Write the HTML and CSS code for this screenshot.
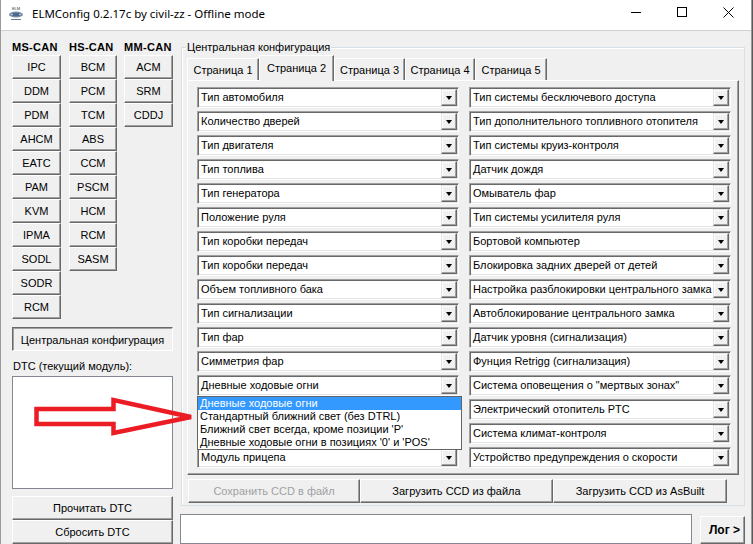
FILE: index.html
```html
<!DOCTYPE html>
<html>
<head>
<meta charset="utf-8">
<link rel="stylesheet" href="styles.css">
</head>
<body>
<div class="window">
  <div class="titlebar">
    <svg class="appicon" width="16" height="16" viewBox="0 0 16 16">
      <text x="8" y="4" font-size="4" font-family="Liberation Sans" text-anchor="middle" fill="#333">ELM</text>
      <ellipse cx="8" cy="8.5" rx="7" ry="3" fill="#7d8ea6"/>
      <ellipse cx="8" cy="8.5" rx="4.5" ry="1.8" fill="#4b6a8f"/>
      <circle cx="4" cy="8.5" r="0.8" fill="#cfe3f5"/>
      <circle cx="12" cy="8.5" r="0.8" fill="#cfe3f5"/>
      <rect x="3" y="13" width="10" height="1" fill="#6b7b8c"/>
    </svg>
    <span class="title">ELMConfig 0.2.17c by civil-zz - Offline mode</span>
    <div class="winctl">
      <span class="ctl"><svg width="10" height="10" viewBox="0 0 10 10"><path d="M0 5.5H10" stroke="#000" stroke-width="1"/></svg></span>
      <span class="ctl"><svg width="10" height="10" viewBox="0 0 10 10"><rect x="0.5" y="0.5" width="9" height="9" fill="none" stroke="#000" stroke-width="1"/></svg></span>
      <span class="ctl"><svg width="11" height="11" viewBox="0 0 11 11"><path d="M0.5 0.5L10.5 10.5M10.5 0.5L0.5 10.5" stroke="#000" stroke-width="1"/></svg></span>
    </div>
  </div>
  <div class="client">
    <div class="left">
      <div class="can-cols">
        <div class="can-col c1">
          <div class="can-h">MS-CAN</div>
          <div class="btn mod">IPC</div>
          <div class="btn mod">DDM</div>
          <div class="btn mod">PDM</div>
          <div class="btn mod">AHCM</div>
          <div class="btn mod">EATC</div>
          <div class="btn mod">PAM</div>
          <div class="btn mod">KVM</div>
          <div class="btn mod">IPMA</div>
          <div class="btn mod">SODL</div>
          <div class="btn mod">SODR</div>
          <div class="btn mod">RCM</div>
        </div>
        <div class="can-col c2">
          <div class="can-h">HS-CAN</div>
          <div class="btn mod">BCM</div>
          <div class="btn mod">PCM</div>
          <div class="btn mod">TCM</div>
          <div class="btn mod">ABS</div>
          <div class="btn mod">CCM</div>
          <div class="btn mod">PSCM</div>
          <div class="btn mod">HCM</div>
          <div class="btn mod">RCM</div>
          <div class="btn mod">SASM</div>
        </div>
        <div class="can-col c3">
          <div class="can-h">MM-CAN</div>
          <div class="btn mod">ACM</div>
          <div class="btn mod">SRM</div>
          <div class="btn mod">CDDJ</div>
        </div>
      </div>
      <div class="btn wide pressed central">Центральная конфигурация</div>
      <div class="dtc-label">DTC (текущий модуль):</div>
      <div class="listbox"></div>
      <div class="btn wide">Прочитать DTC</div>
      <div class="btn wide">Сбросить DTC</div>
    </div>
    <div class="right">
      <div class="group">
        <span class="group-label">Центральная конфигурация</span>
        <div class="tabs">
          <div class="tab t1">Страница 1</div>
          <div class="tab sel t2">Страница 2</div>
          <div class="tab t3">Страница 3</div>
          <div class="tab t4">Страница 4</div>
          <div class="tab t5">Страница 5</div>
        </div>
        <div class="tabpanel">
          <div class="combos">
            <div class="col">
              <div class="combo"><span class="val">Тип автомобиля</span><span class="dd"><i></i></span></div>
              <div class="combo"><span class="val">Количество дверей</span><span class="dd"><i></i></span></div>
              <div class="combo"><span class="val">Тип двигателя</span><span class="dd"><i></i></span></div>
              <div class="combo"><span class="val">Тип топлива</span><span class="dd"><i></i></span></div>
              <div class="combo"><span class="val">Тип генератора</span><span class="dd"><i></i></span></div>
              <div class="combo"><span class="val">Положение руля</span><span class="dd"><i></i></span></div>
              <div class="combo"><span class="val">Тип коробки передач</span><span class="dd"><i></i></span></div>
              <div class="combo"><span class="val">Тип коробки передач</span><span class="dd"><i></i></span></div>
              <div class="combo"><span class="val">Объем топливного бака</span><span class="dd"><i></i></span></div>
              <div class="combo"><span class="val">Тип сигнализации</span><span class="dd"><i></i></span></div>
              <div class="combo"><span class="val">Тип фар</span><span class="dd"><i></i></span></div>
              <div class="combo"><span class="val">Симметрия фар</span><span class="dd"><i></i></span></div>
              <div class="combo"><span class="val">Дневные ходовые огни</span><span class="dd"><i></i></span></div>
              <div class="combo"><span class="val"></span><span class="dd"><i></i></span></div>
              <div class="combo"><span class="val"></span><span class="dd"><i></i></span></div>
              <div class="combo"><span class="val">Модуль прицепа</span><span class="dd"><i></i></span></div>
            </div>
            <div class="col">
              <div class="combo"><span class="val">Тип системы бесключевого доступа</span><span class="dd"><i></i></span></div>
              <div class="combo"><span class="val">Тип дополнительного топливного отопителя</span><span class="dd"><i></i></span></div>
              <div class="combo"><span class="val">Тип системы круиз-контроля</span><span class="dd"><i></i></span></div>
              <div class="combo"><span class="val">Датчик дождя</span><span class="dd"><i></i></span></div>
              <div class="combo"><span class="val">Омыватель фар</span><span class="dd"><i></i></span></div>
              <div class="combo"><span class="val">Тип системы усилителя руля</span><span class="dd"><i></i></span></div>
              <div class="combo"><span class="val">Бортовой компьютер</span><span class="dd"><i></i></span></div>
              <div class="combo"><span class="val">Блокировка задних дверей от детей</span><span class="dd"><i></i></span></div>
              <div class="combo"><span class="val">Настройка разблокировки центрального замка</span><span class="dd"><i></i></span></div>
              <div class="combo"><span class="val">Автоблокирование центрального замка</span><span class="dd"><i></i></span></div>
              <div class="combo"><span class="val">Датчик уровня (сигнализация)</span><span class="dd"><i></i></span></div>
              <div class="combo"><span class="val">Фунция Retrigg (сигнализация)</span><span class="dd"><i></i></span></div>
              <div class="combo"><span class="val">Система оповещения о "мертвых зонах"</span><span class="dd"><i></i></span></div>
              <div class="combo"><span class="val">Электрический отопитель PTC</span><span class="dd"><i></i></span></div>
              <div class="combo"><span class="val">Система климат-контроля</span><span class="dd"><i></i></span></div>
              <div class="combo"><span class="val">Устройство предупреждения о скорости</span><span class="dd"><i></i></span></div>
            </div>
          </div>
          <div class="droplist">
            <div class="opt hl">Дневные ходовые огни</div>
            <div class="opt">Стандартный ближний свет (без DTRL)</div>
            <div class="opt">Ближний свет всегда, кроме позиции 'P'</div>
            <div class="opt">Дневные ходовые огни в позициях '0' и 'POS'</div>
          </div>
        </div>
        <div class="actions">
          <div class="btn act a1 disabled">Сохранить CCD в файл</div>
          <div class="btn act a2">Загрузить CCD из файла</div>
          <div class="btn act a3">Загрузить CCD из AsBuilt</div>
        </div>
      </div>
      <div class="logrow">
        <div class="logbox"></div>
        <div class="btn logbtn">Лог &gt;</div>
      </div>
    </div>
  </div>
  <svg class="arrow" width="180" height="60" viewBox="20 390 180 60">
    <polygon points="35.5,409 112.5,409 112.5,400 190,417 112.5,433 112.5,424 35.5,424" fill="none" stroke="#ec1c24" stroke-width="4.5" stroke-linejoin="miter"/>
  </svg>
</div>
</body>
</html>
```

FILE: styles.css
```css
* { box-sizing: border-box; }
html, body { margin: 0; padding: 0; }
body {
  width: 753px;
  height: 544px;
  overflow: hidden;
  background: #5a5a5a;
  font-family: "Liberation Sans", Arial, sans-serif;
  font-size: 11px;
  color: #000;
}
.window {
  position: relative;
  width: 752px;
  height: 544px;
  background: #f0f0f0;
  border-left: 1px solid #9a9a9a;
  border-right: 1px solid #9a9a9a;
}
.titlebar {
  height: 30px;
  background: #fff;
  display: flex;
  align-items: center;
  padding-left: 7px;
}
.appicon { flex: none; margin-top: -2px; }
.title {
  margin-left: 8px;
  font-family: "Noto Sans", "Open Sans", sans-serif;
  font-size: 11.5px;
  margin-top: -3px;
}
.winctl {
  margin-left: auto;
  display: flex;
  height: 30px;
}
.ctl {
  width: 46px;
  height: 30px;
  display: flex;
  align-items: center;
  justify-content: center;
  margin-top: -3px;
}
.client {
  display: flex;
  height: 514px;
  border-top: 1px solid #d0d0d0;
  padding-left: 11px;
}
.left {
  width: 161px;
  padding-top: 8px;
  display: flex;
  flex-direction: column;
}
.can-cols { display: flex; }
.can-col { display: flex; flex-direction: column; }
.c1 { width: 49px; margin-right: 8px; }
.c2 { width: 48px; margin-right: 7px; }
.c3 { width: 49px; }
.can-h {
  height: 16px;
  line-height: 16px;
  font-weight: bold;
  font-size: 11px;
  letter-spacing: 0.3px;
  white-space: nowrap;
}
.btn {
  background: #f0f0f0;
  border: 1px solid;
  border-color: #fff #696969 #696969 #fff;
  box-shadow: inset -1px -1px 0 #a0a0a0;
  display: flex;
  align-items: center;
  justify-content: center;
  white-space: nowrap;
}
.mod { height: 24px; }
.wide { height: 24px; }
.pressed {
  border-color: #696969 #fff #fff #696969;
  box-shadow: inset 1px 1px 0 #a0a0a0;
  padding-top: 1px;
}
.central { margin-top: 8px; }
.dtc-label {
  margin-top: 8px;
  height: 17px;
  line-height: 14px;
  padding-left: 1px;
}
.listbox {
  height: 113px;
  background: #fff;
  border: 1px solid #828790;
  margin-bottom: 7px;
}
.right {
  margin-left: 7px;
  width: 566px;
  display: flex;
  flex-direction: column;
}
.group {
  position: relative;
  margin-top: 16px;
  margin-left: 1px;
  width: 564px;
  height: 465px;
  border: 1px solid #d5dfe5;
  box-shadow: 1px 1px 0 #fff inset;
  padding: 7px 6px 0 5px;
}
.group-label {
  position: absolute;
  top: -7px;
  left: 4px;
  background: #f0f0f0;
  padding: 0 1px;
  line-height: 13px;
}
.tabs {
  display: flex;
  height: 25px;
  align-items: flex-end;
  position: relative;
  z-index: 1;
}
.tab {
  height: 22px;
  display: flex;
  align-items: center;
  justify-content: center;
  background: #f0f0f0;
  border: 1px solid;
  border-bottom: none;
  border-color: #fff #696969 #696969 #fff;
  box-shadow: inset -1px 0 0 #a0a0a0;
  white-space: nowrap;
}
.t1 { width: 72px; }
.t2 { width: 75px; }
.t3 { width: 71px; }
.t4 { width: 70px; }
.t5 { width: 72px; }
.sel {
  height: 26px;
  margin-bottom: -1px;
  padding-bottom: 2px;
}
.tabpanel {
  position: relative;
  width: 552px;
  height: 395px;
  border: 1px solid;
  border-color: #fff #696969 #696969 #fff;
  box-shadow: inset -1px -1px 0 #a0a0a0;
  padding: 6px 0 0 9px;
}
.combos { display: flex; }
.col { width: 262px; display: flex; flex-direction: column; }
.col + .col { margin-left: 10px; }
.combo {
  height: 21px;
  margin-bottom: 3px;
  display: flex;
  background: #fff;
  border: 1px solid;
  border-color: #a0a0a0 #fff #fff #a0a0a0;
  box-shadow: inset 1px 1px 0 #696969, inset -1px -1px 0 #e3e3e3;
  padding: 1px;
}
.val {
  flex: 1;
  overflow: hidden;
  white-space: nowrap;
  padding-left: 2px;
  line-height: 17px;
}
.dd {
  flex: none;
  width: 16px;
  height: 17px;
  background: #f0f0f0;
  border: 1px solid;
  border-color: #e3e3e3 #696969 #696969 #e3e3e3;
  box-shadow: inset -1px -1px 0 #a0a0a0, inset 1px 1px 0 #fff;
  display: flex;
  align-items: center;
  justify-content: center;
}
.dd i {
  width: 0;
  height: 0;
  border-left: 3.5px solid transparent;
  border-right: 3.5px solid transparent;
  border-top: 4px solid #000;
  margin-left: -1px;
}
.droplist {
  position: absolute;
  left: 9px;
  top: 315px;
  width: 265px;
  height: 54px;
  background: #fff;
  border: 1px solid #646464;
  padding: 0;
}
.opt {
  height: 13px;
  line-height: 13px;
  padding-left: 2px;
  white-space: nowrap;
}
.opt.hl { background: #3399ff; color: #fff; }
.actions {
  display: flex;
  margin-top: 4px;
  margin-left: 1px;
}
.act { height: 24px; }
.a1 { width: 172px; }
.a2 { width: 193px; }
.a3 { width: 174px; }
.disabled { color: #a0a0a0; }
.logrow {
  display: flex;
  margin-top: 8px;
}
.logbox {
  width: 512px;
  height: 30px;
  background: #fff;
  border: 1px solid #828790;
}
.logbtn {
  margin-left: 8px;
  width: 45px;
  height: 28px;
  margin-top: 2px;
  font-weight: bold;
  font-size: 12px;
  justify-content: flex-end;
  padding-right: 4px;
  align-items: flex-start;
  padding-top: 6px;
}
.arrow {
  position: absolute;
  left: 20px;
  top: 390px;
}
```
